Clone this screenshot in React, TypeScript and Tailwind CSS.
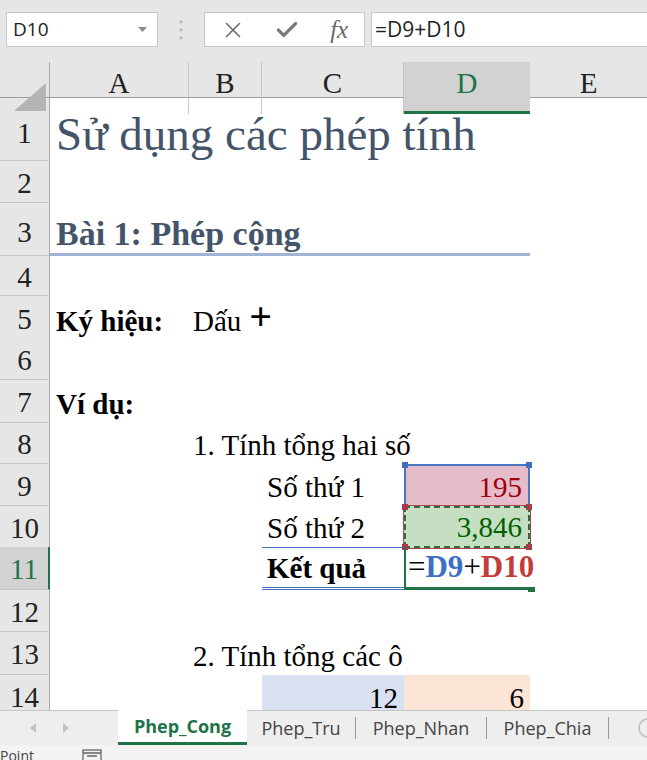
import {X, Check} from "lucide-react";

const serif = "font-['Liberation_Serif','Times_New_Roman',serif]";
const ui = "font-['Open_Sans','Noto_Sans',sans-serif]";
const gridCols = "grid grid-cols-[50px_139px_73px_142px_126px_117px]";

function RowHead({n, selected = false, pad = "pt-[4px]"}: {n: number; selected?: boolean; pad?: string}) {
  if (selected) {
    return (
      <div className={`flex items-center justify-center ${pad} bg-[#d2d2d2] border-b border-[#c6c6c6] border-r-2 border-r-[#217346] text-[#217346] text-[29px] leading-[1.15] ${serif}`}>
        {n}
      </div>
    );
  }
  return (
    <div className={`flex items-center justify-center ${pad} bg-[#e6e6e6] border-b border-[#c6c6c6] border-r border-r-[#ababab] text-[#222] text-[29px] leading-[1.15] ${serif}`}>
      {n}
    </div>
  );
}

function Corner({color}: {color: string}) {
  return <div className={`absolute w-[6px] h-[6px] ${color}`}></div>;
}

export default function App() {
  return (
    <div className={`w-[647px] h-[760px] overflow-hidden flex flex-col bg-white ${ui}`}>
      {/* formula bar */}
      <div className="h-[62px] bg-[#e6e6e6] flex items-start pt-[12px] shrink-0">
        <div className="ml-[6px] w-[152px] h-[35px] bg-white border border-[#c6c6c6] flex items-center justify-between pl-[6px] pr-[10px]">
          <span className="text-[19px] text-[#222]">D10</span>
          <svg width="9" height="5" viewBox="0 0 9 5"><path d="M0 0h9L4.5 5z" fill="#8a8a8a"/></svg>
        </div>
        <div className="w-[46px] h-[35px] flex items-center justify-center">
          <svg width="4" height="20" viewBox="0 0 4 20">
            <circle cx="2" cy="2" r="1.4" fill="#b5b5b5"/>
            <circle cx="2" cy="10" r="1.4" fill="#b5b5b5"/>
            <circle cx="2" cy="18" r="1.4" fill="#b5b5b5"/>
          </svg>
        </div>
        <div className="w-[161px] h-[35px] bg-white border border-[#c6c6c6] flex items-center">
          <div className="w-[56px] flex justify-center"><X size={26} strokeWidth={1.5} color="#6a6a6a"/></div>
          <div className="w-[54px] flex justify-center"><Check size={26} strokeWidth={3} color="#7a7a7a"/></div>
          <div className={`w-[50px] flex justify-center text-[25px] italic text-[#6a6a6a] ${serif}`}>fx</div>
        </div>
        <div className="ml-[6px] flex-1 h-[35px] bg-white border border-[#c6c6c6] border-r-0 flex items-center pl-[3px]">
          <span className="text-[21px] text-[#222]">=D9+D10</span>
        </div>
      </div>

      {/* column headers */}
      <div className={`${gridCols} h-[36px] shrink-0 bg-[#e6e6e6] border-b border-[#9b9b9b] text-[29px] text-[#222] ${serif}`}>
        <div className="relative border-r border-[#ababab]">
          <svg className="absolute right-[3px] bottom-[3px]" width="32" height="28" viewBox="0 0 32 28"><path d="M32 0V28H0z" fill="#b4b4b4"/></svg>
        </div>
        <div className="flex items-center justify-center pb-[8px] border-r border-[#c6c6c6]">A</div>
        <div className="flex items-center justify-center pb-[8px] border-r border-[#c6c6c6]">B</div>
        <div className="flex items-center justify-center pb-[8px] border-r border-[#c6c6c6]">C</div>
        <div className="flex items-center justify-center pb-[5px] bg-[#d2d2d2] text-[#217346] border-b-[3px] border-[#217346]">D</div>
        <div className="flex items-center justify-center pb-[8px]">E</div>
      </div>

      {/* sheet */}
      <div className={`flex-1 overflow-hidden text-[29px] leading-[1.32] text-black ${serif}`}>
        <div className={`${gridCols} h-[63px]`}>
          <RowHead n={1} pad="pt-[10px]"/>
          <div className="col-span-5 flex items-end pl-[6px] whitespace-nowrap text-[47px] leading-[1.1] text-[#44546a]">Sử dụng các phép tính</div>
        </div>
        <div className={`${gridCols} h-[42px]`}>
          <RowHead n={2}/>
        </div>
        <div className={`${gridCols} h-[53px]`}>
          <RowHead n={3} pad="pt-[8px]"/>
          <div className="col-span-4 flex items-end pl-[6px] whitespace-nowrap text-[34px] leading-[1.15] font-bold text-[#44546a] border-b-[3px] border-[#a2b4d6]">Bài 1: Phép cộng</div>
        </div>
        <div className={`${gridCols} h-[40px]`}>
          <RowHead n={4}/>
        </div>
        <div className={`${gridCols} h-[43px]`}>
          <RowHead n={5}/>
          <div className="flex items-end pl-[6px] font-bold whitespace-nowrap">Ký hiệu:</div>
          <div className="col-span-2 flex items-end pl-[4px] whitespace-nowrap">Dấu <span className="ml-[8px] font-bold text-[40px] leading-[1.1] relative top-[-1px]">+</span></div>
        </div>
        <div className={`${gridCols} h-[41px]`}>
          <RowHead n={6}/>
        </div>
        <div className={`${gridCols} h-[43px]`}>
          <RowHead n={7}/>
          <div className="flex items-end pl-[6px] font-bold whitespace-nowrap">Ví dụ:</div>
        </div>
        <div className={`${gridCols} h-[41px]`}>
          <RowHead n={8}/>
          <div></div>
          <div className="col-span-3 flex items-end pl-[4px] whitespace-nowrap">1. Tính tổng hai số</div>
        </div>
        <div className={`${gridCols} h-[42px]`}>
          <RowHead n={9}/>
          <div></div>
          <div></div>
          <div className="flex items-end pl-[5px] whitespace-nowrap">Số thứ 1</div>
          <div className="relative flex items-end justify-end pr-[6px] bg-[#e6bccb] text-[#9c0006] border-t-2 border-x-2 border-[#4a76c0]">
            195
            <Corner color="left-[-4px] top-[-4px] bg-[#3f6fc0]"/>
            <Corner color="right-[-4px] top-[-4px] bg-[#3f6fc0]"/>
          </div>
        </div>
        <div className={`${gridCols} h-[41px]`}>
          <RowHead n={10}/>
          <div></div>
          <div></div>
          <div className="flex items-end pl-[5px] whitespace-nowrap border-b border-[#4472c4]">Số thứ 2</div>
          <div className="relative flex items-end justify-end pr-[6px] bg-[#c6dfc3] text-[#006100] border-2 border-dashed border-[#2f6b47] outline outline-1 outline-[#a94450]">
            3,846
            <Corner color="left-[-4px] top-[-4px] bg-[#a93a48]"/>
            <Corner color="right-[-4px] top-[-4px] bg-[#a93a48]"/>
            <Corner color="left-[-4px] bottom-[-4px] bg-[#a93a48]"/>
            <Corner color="right-[-4px] bottom-[-4px] bg-[#a93a48]"/>
          </div>
        </div>
        <div className={`${gridCols} h-[43px]`}>
          <RowHead n={11} selected/>
          <div></div>
          <div></div>
          <div className="flex items-end pl-[5px] font-bold whitespace-nowrap border-b-[3px] border-double border-[#4472c4]">Kết quả</div>
          <div className="relative flex items-end pl-[2px] text-[31px] leading-[1.25] whitespace-nowrap overflow-visible border-l-2 border-l-[#217346] border-b-[3px] border-b-[#217346]">
            <span>=</span><span className="font-bold text-[#3d6fc6]">D9</span><span>+</span><span className="font-bold text-[#c43b3b]">D10</span>
            <div className="absolute right-[-5px] bottom-[-5px] w-[7px] h-[5px] bg-[#217346]"></div>
          </div>
        </div>
        <div className={`${gridCols} h-[42px]`}>
          <RowHead n={12}/>
        </div>
        <div className={`${gridCols} h-[43px]`}>
          <RowHead n={13}/>
          <div></div>
          <div className="col-span-3 flex items-end pl-[4px] whitespace-nowrap">2. Tính tổng các ô</div>
        </div>
        <div className={`${gridCols} h-[42px]`}>
          <RowHead n={14}/>
          <div></div>
          <div></div>
          <div className="flex items-end justify-end pr-[6px] bg-[#d9e1f2]">12</div>
          <div className="flex items-end justify-end pr-[6px] bg-[#fce4d6]">6</div>
        </div>
      </div>

      {/* sheet tabs */}
      <div className="h-[35px] shrink-0 bg-[#eeeeee] border-t border-[#c6c6c6] flex items-stretch text-[18px] text-[#444]">
        <div className="w-[118px] flex items-center">
          <svg className="ml-[30px]" width="6" height="10" viewBox="0 0 6 10"><path d="M6 0V10L0 5z" fill="#c2c2c2"/></svg>
          <svg className="ml-[27px]" width="6" height="10" viewBox="0 0 6 10"><path d="M0 0V10L6 5z" fill="#c2c2c2"/></svg>
        </div>
        <div className="w-[129px] bg-white flex items-center justify-center font-bold text-[#217346] border-b-[3px] border-[#217346] mt-[-1px]">Phep_Cong</div>
        <div className="w-[109px] flex items-center justify-center border-r border-[#9a9a9a] my-[6px]">Phep_Tru</div>
        <div className="w-[131px] flex items-center justify-center border-r border-[#9a9a9a] my-[6px]">Phep_Nhan</div>
        <div className="w-[122px] flex items-center justify-center border-r border-[#9a9a9a] my-[6px]">Phep_Chia</div>
        <div className="flex-1 flex items-center justify-end">
          <svg width="10" height="22" viewBox="0 0 10 22"><circle cx="11" cy="11" r="9" fill="none" stroke="#bdbdbd" strokeWidth="1.5"/></svg>
        </div>
      </div>

      {/* status bar */}
      <div className="h-[15px] shrink-0 bg-[#f3f3f3] relative overflow-hidden text-[14px] text-[#444]">
        <span className="absolute left-[0px] top-[4px] leading-none">Point</span>
        <svg className="absolute left-[82px] top-[4px]" width="20" height="12" viewBox="0 0 20 12">
          <rect x="1" y="1" width="18" height="14" fill="none" stroke="#666" strokeWidth="1.3"/>
          <path d="M1 4h18M5 7h10" stroke="#666" strokeWidth="1.3"/>
        </svg>
      </div>
    </div>
  );
}
